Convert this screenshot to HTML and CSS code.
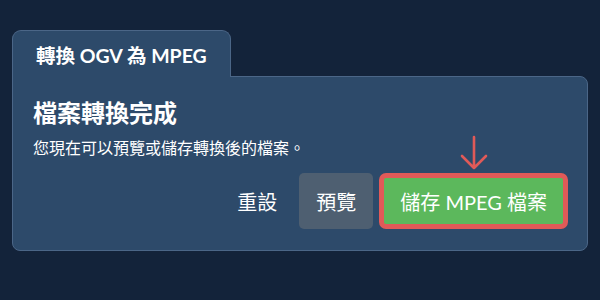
FILE: index.html
```html
<!DOCTYPE html>
<html lang="zh-Hant">
  <head>
    <meta charset="UTF-8" />
    <title>轉換 OGV 為 MPEG</title>
    <link rel="stylesheet" href="styles.css">
  </head>
  <body>
    <div class="converter">
      <div class="tab">轉換 OGV 為 MPEG</div>
      <div class="panel">
        <div class="title">檔案轉換完成</div>
        <div class="desc">您現在可以預覽或儲存轉換後的檔案。</div>
        <div class="actions">
          <button class="btn reset">重設</button>
          <button class="btn preview">預覽</button>
          <button class="btn save">
            <svg class="arrow" width="30" height="36" viewBox="0 0 30 36">
              <path d="M15 2 V33 M3 21 L15 33 L27 21" fill="none" stroke="#e05a58" stroke-width="2.6" stroke-linecap="round" stroke-linejoin="round" />
            </svg>
            儲存 MPEG 檔案
          </button>
        </div>
      </div>
    </div>
  </body>
</html>
```

FILE: styles.css
```css
* {
  box-sizing: border-box;
}

body {
  margin: 0;
  background: #13233a;
  font-family: "Lato", "Noto Sans CJK TC", sans-serif;
  color: #fff;
}

.converter {
  padding: 30px 12px 0;
}

.tab {
  display: inline-block;
  height: 47px;
  margin-bottom: -1px;
  padding: 9px 23px 0;
  font-size: 19.5px;
  font-weight: 700;
  background: #2d4a6a;
  border: 1px solid #4b6687;
  border-bottom: none;
  border-radius: 9px 9px 0 0;
  position: relative;
  z-index: 1;
}

.panel {
  height: 175px;
  padding: 19px 20px 0;
  background: #2d4a6a;
  border: 1px solid #4b6687;
  border-radius: 0 8px 8px 8px;
}

.title {
  font-size: 24px;
  font-weight: 700;
  line-height: 34px;
}

.desc {
  margin-top: 7px;
  font-size: 16px;
  line-height: 22px;
}

.actions {
  display: flex;
  justify-content: flex-end;
  align-items: center;
  gap: 6px;
  margin-top: 14px;
  margin-right: -1px;
}

.btn {
  font-family: "Lato", "Noto Sans CJK TC", sans-serif;
  font-size: 20px;
  color: #fff;
  height: 56px;
  border: none;
  border-radius: 5px;
  padding: 0 17px;
  cursor: pointer;
}

.reset {
  background: none;
  padding: 0 16px;
}

.preview {
  background: #4e5f71;
}

.save {
  position: relative;
  background: #5cb85c;
  border: 5px solid #e05a58;
  border-radius: 7px;
  padding: 0 16px;
}

.arrow {
  position: absolute;
  left: 50%;
  top: -43px;
  margin-left: -15px;
}
```
